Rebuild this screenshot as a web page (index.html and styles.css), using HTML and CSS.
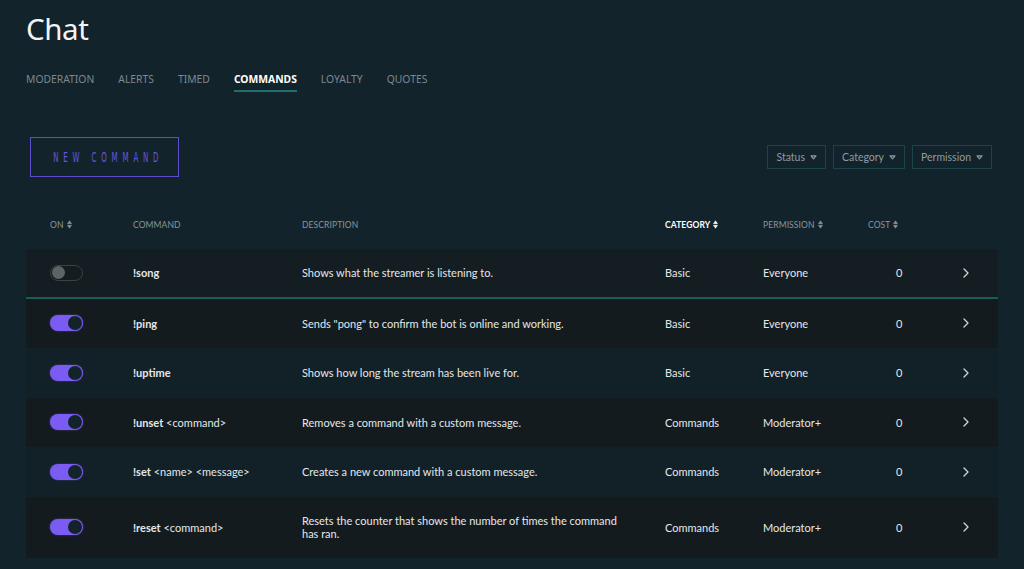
FILE: index.html
```html
<!DOCTYPE html>
<html>
<head>
<meta charset="utf-8">
<link rel="stylesheet" href="styles.css">
</head>
<body>
<div class="page">
  <h1 class="title">Chat</h1>
  <nav class="tabs">
    <span class="tab">MODERATION</span>
    <span class="tab">ALERTS</span>
    <span class="tab">TIMED</span>
    <span class="tab active">COMMANDS</span>
    <span class="tab">LOYALTY</span>
    <span class="tab">QUOTES</span>
  </nav>
  <div class="toolbar">
    <button class="new-btn"><span class="new-label">NEW COMMAND</span></button>
    <div class="filters">
      <span class="filter">Status <svg class="caret" viewBox="0 0 8 6"><path d="M1 1h6L4 4.6z" fill="none" stroke="currentColor" stroke-width="1.4" stroke-linejoin="round"/></svg></span>
      <span class="filter">Category <svg class="caret" viewBox="0 0 8 6"><path d="M1 1h6L4 4.6z" fill="none" stroke="currentColor" stroke-width="1.4" stroke-linejoin="round"/></svg></span>
      <span class="filter">Permission <svg class="caret" viewBox="0 0 8 6"><path d="M1 1h6L4 4.6z" fill="none" stroke="currentColor" stroke-width="1.4" stroke-linejoin="round"/></svg></span>
    </div>
  </div>
  <div class="table">
    <div class="thead">
      <span>ON <svg class="sort" viewBox="0 0 6 10"><path d="M3 0.5L5.5 4H0.5z M3 9.5L0.5 6h5z" fill="currentColor" stroke="currentColor" stroke-width="0.6" stroke-linejoin="round"/></svg></span>
      <span>COMMAND</span>
      <span>DESCRIPTION</span>
      <span class="sorted">CATEGORY <svg class="sort" viewBox="0 0 6 10"><path d="M3 0.5L5.5 4H0.5z M3 9.5L0.5 6h5z" fill="currentColor" stroke="currentColor" stroke-width="0.6" stroke-linejoin="round"/></svg></span>
      <span>PERMISSION <svg class="sort" viewBox="0 0 6 10"><path d="M3 0.5L5.5 4H0.5z M3 9.5L0.5 6h5z" fill="currentColor" stroke="currentColor" stroke-width="0.6" stroke-linejoin="round"/></svg></span>
      <span>COST <svg class="sort" viewBox="0 0 6 10"><path d="M3 0.5L5.5 4H0.5z M3 9.5L0.5 6h5z" fill="currentColor" stroke="currentColor" stroke-width="0.6" stroke-linejoin="round"/></svg></span>
      <span></span>
    </div>
    <div class="row dark first">
      <span class="toggle off"><i></i></span>
      <span class="cmd"><b>!song</b></span>
      <span class="desc">Shows what the streamer is listening to.</span>
      <span>Basic</span>
      <span>Everyone</span>
      <span class="cost">0</span>
      <span class="chev"><svg viewBox="0 0 6 10"><path d="M1 1l4 4-4 4" fill="none" stroke="currentColor" stroke-width="1.3" stroke-linecap="round" stroke-linejoin="round"/></svg></span>
    </div>
    <div class="row dark">
      <span class="toggle on"><i></i></span>
      <span class="cmd"><b>!ping</b></span>
      <span class="desc">Sends "pong" to confirm the bot is online and working.</span>
      <span>Basic</span>
      <span>Everyone</span>
      <span class="cost">0</span>
      <span class="chev"><svg viewBox="0 0 6 10"><path d="M1 1l4 4-4 4" fill="none" stroke="currentColor" stroke-width="1.3" stroke-linecap="round" stroke-linejoin="round"/></svg></span>
    </div>
    <div class="row light">
      <span class="toggle on"><i></i></span>
      <span class="cmd"><b>!uptime</b></span>
      <span class="desc">Shows how long the stream has been live for.</span>
      <span>Basic</span>
      <span>Everyone</span>
      <span class="cost">0</span>
      <span class="chev"><svg viewBox="0 0 6 10"><path d="M1 1l4 4-4 4" fill="none" stroke="currentColor" stroke-width="1.3" stroke-linecap="round" stroke-linejoin="round"/></svg></span>
    </div>
    <div class="row dark">
      <span class="toggle on"><i></i></span>
      <span class="cmd"><b>!unset</b> &lt;command&gt;</span>
      <span class="desc">Removes a command with a custom message.</span>
      <span>Commands</span>
      <span>Moderator+</span>
      <span class="cost">0</span>
      <span class="chev"><svg viewBox="0 0 6 10"><path d="M1 1l4 4-4 4" fill="none" stroke="currentColor" stroke-width="1.3" stroke-linecap="round" stroke-linejoin="round"/></svg></span>
    </div>
    <div class="row light">
      <span class="toggle on"><i></i></span>
      <span class="cmd"><b>!set</b> &lt;name&gt; &lt;message&gt;</span>
      <span class="desc">Creates a new command with a custom message.</span>
      <span>Commands</span>
      <span>Moderator+</span>
      <span class="cost">0</span>
      <span class="chev"><svg viewBox="0 0 6 10"><path d="M1 1l4 4-4 4" fill="none" stroke="currentColor" stroke-width="1.3" stroke-linecap="round" stroke-linejoin="round"/></svg></span>
    </div>
    <div class="row dark tall">
      <span class="toggle on"><i></i></span>
      <span class="cmd"><b>!reset</b> &lt;command&gt;</span>
      <span class="desc">Resets the counter that shows the number of times the command has ran.</span>
      <span>Commands</span>
      <span>Moderator+</span>
      <span class="cost">0</span>
      <span class="chev"><svg viewBox="0 0 6 10"><path d="M1 1l4 4-4 4" fill="none" stroke="currentColor" stroke-width="1.3" stroke-linecap="round" stroke-linejoin="round"/></svg></span>
    </div>
  </div>
</div>
</body>
</html>
```
FILE: styles.css
```css
* { box-sizing: border-box; }
html, body {
  margin: 0;
  padding: 0;
  background: #12232b;
  height: 100%;
  overflow: hidden;
}
body {
  font-family: "Lato", "Noto Sans", sans-serif;
  color: #e2e6e8;
}
.page {
  padding: 0 26px;
}
.title {
  margin: 0;
  padding-top: 11px;
  font-family: "Noto Sans", sans-serif;
  font-weight: 400;
  font-size: 29.5px;
  line-height: 36px;
  color: #f2f4f5;
  letter-spacing: -0.4px;
}
.tabs {
  display: flex;
  gap: 24px;
  margin-top: 25px;
  font-family: "Noto Sans", sans-serif;
  font-size: 10.35px;
}
.tab {
  color: #7d898e;
  padding-bottom: 4px;
  border-bottom: 2px solid transparent;
  line-height: 14px;
}
.tab.active {
  color: #ffffff;
  font-weight: 700;
  border-bottom-color: #1f6e6c;
}
.toolbar {
  display: flex;
  justify-content: space-between;
  align-items: center;
  margin-top: 45px;
  padding-left: 4px;
  padding-right: 6px;
}
.new-btn {
  display: flex;
  align-items: center;
  justify-content: center;
  width: 149px;
  height: 40px;
  background: transparent;
  border: 1px solid #5b4fd0;
  padding: 0;
  overflow: hidden;
}
.new-label {
  display: inline-block;
  color: #6457e0;
  font-family: "DejaVu Sans Condensed", "DejaVu Sans", sans-serif;
  font-stretch: condensed;
  font-size: 14px;
  letter-spacing: 8.6px;
  margin-right: -8.6px;
  transform: scaleX(0.56);
  white-space: nowrap;
}
.filters {
  display: flex;
  gap: 7px;
}
.filter {
  display: flex;
  align-items: center;
  gap: 5px;
  height: 24px;
  padding: 0 8px;
  border: 1px solid #1a4447;
  color: #8e9ca1;
  font-size: 10.5px;
}
.caret {
  width: 7px;
  height: 5px;
  color: #8e9ca1;
}
.table {
  margin-top: 27px;
}
.thead, .row {
  display: grid;
  grid-template-columns: 83px 169px 363px 98px 105px 95px 1fr;
  padding-left: 24px;
  align-items: center;
}
.thead {
  height: 45px;
  padding-bottom: 4px;
  font-size: 8.5px;
  color: #8b969b;
  letter-spacing: 0.1px;
}
.thead span {
  display: flex;
  align-items: center;
  gap: 3px;
}
.thead .sorted {
  color: #ffffff;
  font-weight: 700;
}
.sort {
  width: 5px;
  height: 9px;
}
.row {
  height: 49.5px;
  font-size: 11px;
  color: #e4e8ea;
}
.row.dark { background: #131b1f; }
.row.light { background: #122027; }
.row.first {
  height: 49.5px;
  border-bottom: 2px solid #1d5a5a;
  background: #131d22;
}
.row.tall { height: 61px; }
.cmd b { font-weight: 700; }
.desc {
  padding-right: 40px;
  line-height: 13px;
}
.cost { padding-left: 28px; }
.chev {
  display: flex;
  align-items: center;
  padding-left: 0;
  color: #d0d6d8;
}
.chev svg {
  width: 6px;
  height: 10px;
}
.toggle {
  display: flex;
  align-items: center;
  width: 33px;
  height: 16px;
  border-radius: 8px;
  padding: 2px;
}
.toggle i {
  display: block;
  width: 12px;
  height: 12px;
  border-radius: 50%;
}
.toggle.on {
  background: #7a5cf2;
  justify-content: flex-end;
  box-shadow: 0 0 2px rgba(122, 92, 242, 0.6);
}
.toggle.on i {
  background: #13232a;
  width: 14px;
  height: 14px;
  margin-right: -1px;
}
.toggle.off {
  background: #141c1f;
  border: 1px solid #394244;
  padding: 1px;
}
.toggle.off i {
  background: #5c6465;
  width: 13px;
  height: 13px;
}
```
